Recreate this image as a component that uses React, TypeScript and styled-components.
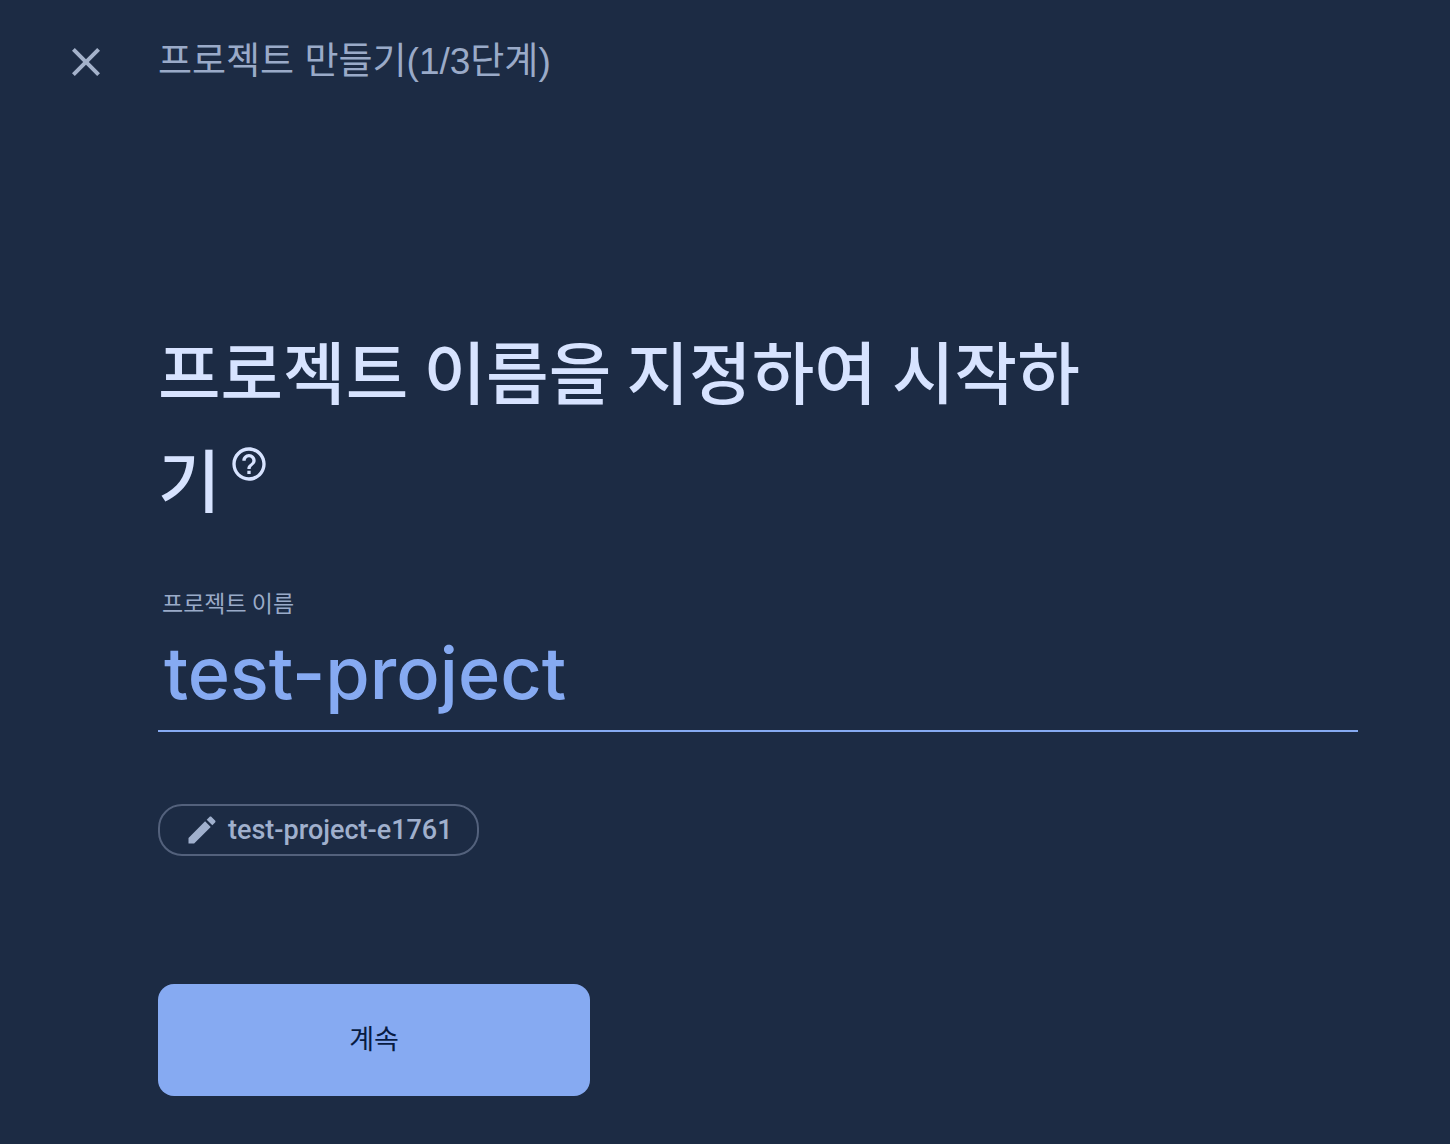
import React, { useState } from "react";
import styled, { createGlobalStyle } from "styled-components";

const GlobalStyle = createGlobalStyle`
  *, *::before, *::after { box-sizing: border-box; }
  body {
    margin: 0;
    background: #1c2b44;
    font-family: "Noto Sans CJK KR", sans-serif;
  }
`;

const Page = styled.div`
  min-height: 100vh;
  padding: 32px 92px 48px 56px;
  background: #1c2b44;
`;

const TopBar = styled.header`
  display: flex;
  align-items: center;
  gap: 42px;
  height: 60px;
`;

const CloseButton = styled.button`
  display: flex;
  align-items: center;
  justify-content: center;
  width: 60px;
  height: 60px;
  padding: 0;
  border: 0;
  background: none;
  color: #a4b2cb;
  cursor: pointer;
`;

const StepTitle = styled.h1`
  margin: 0;
  color: #9aaac8;
  font-family: "Liberation Sans", "Noto Sans CJK KR", sans-serif;
  font-size: 37px;
  font-weight: 400;
  line-height: 60px;
`;

const Form = styled.form`
  display: flex;
  flex-direction: column;
  align-items: flex-start;
  margin-top: 224px;
  padding-left: 102px;
`;

const Heading = styled.h2`
  max-width: 960px;
  margin: 0;
  color: #d7e3ff;
  font-size: 68px;
  font-weight: 500;
  line-height: 108px;
  word-break: break-all;
`;

const HelpButton = styled.button`
  display: inline-flex;
  margin-left: 8px;
  padding: 0;
  border: 0;
  background: none;
  color: inherit;
  vertical-align: 23px;
  cursor: pointer;
`;

const FieldLabel = styled.label`
  margin-top: 54px;
  padding-left: 4px;
  color: #9aaac8;
  font-size: 23px;
  line-height: 32px;
`;

const NameInput = styled.input`
  width: 100%;
  height: 114px;
  padding: 0 6px 4px;
  border: 0;
  border-bottom: 2px solid #86aaf2;
  outline: 0;
  background: none;
  color: #86aaf2;
  font-family: Inter, "Noto Sans CJK KR", sans-serif;
  font-size: 72px;
  font-weight: 500;
`;

const IdChip = styled.button`
  display: flex;
  align-items: center;
  gap: 8px;
  height: 52px;
  margin-top: 72px;
  padding: 0 24px;
  border: 2px solid #53617c;
  border-radius: 24px;
  background: none;
  color: #a0b0cd;
  font-family: Roboto, sans-serif;
  font-size: 27px;
  font-weight: 500;
  cursor: pointer;
`;

const ContinueButton = styled.button`
  width: 432px;
  height: 112px;
  margin-top: 128px;
  padding: 0 0 6px;
  border: 0;
  border-radius: 16px;
  background: #86aaf2;
  color: #081b42;
  font-family: "Noto Sans CJK KR", sans-serif;
  font-size: 27px;
  font-weight: 400;
  cursor: pointer;
`;

function CloseIcon() {
  return (
    <svg width="48" height="48" viewBox="0 0 24 24" fill="currentColor" aria-hidden="true">
      <path d="M19 6.41 17.59 5 12 10.59 6.41 5 5 6.41 10.59 12 5 17.59 6.41 19 12 13.41 17.59 19 19 17.59 13.41 12z" />
    </svg>
  );
}

function HelpIcon() {
  return (
    <svg width="40" height="40" viewBox="0 0 24 24" fill="currentColor" aria-hidden="true">
      <path d="M11 18h2v-2h-2v2zm1-16C6.48 2 2 6.48 2 12s4.48 10 10 10 10-4.480 10-10S17.52 2 12 2zm0 18c-4.410 0-8-3.590-8-8s3.590-8 8-8 8 3.590 8 8-3.590 8-8 8zm0-14c-2.210 0-4 1.790-4 4h2c0-1.100.9-2 2-2s2 .9 2 2c0 2-3 1.750-3 5h2c0-2.250 3-2.500 3-5 0-2.210-1.790-4-4-4z" />
    </svg>
  );
}

function PencilIcon() {
  return (
    <svg width="36" height="36" viewBox="0 0 24 24" fill="currentColor" aria-hidden="true">
      <path d="M3 17.250V21h3.750L17.810 9.940l-3.750-3.750L3 17.250zM20.710 7.040c.39-.39.39-1.020 0-1.410l-2.340-2.340c-.39-.39-1.020-.39-1.410 0l-1.830 1.830 3.750 3.750 1.830-1.830z" />
    </svg>
  );
}

export default function App() {
  const [name, setName] = useState("test-project");
  return (
    <>
      <GlobalStyle />
      <Page>
        <TopBar>
          <CloseButton type="button" aria-label="닫기">
            <CloseIcon />
          </CloseButton>
          <StepTitle>프로젝트 만들기(1/3단계)</StepTitle>
        </TopBar>
        <Form onSubmit={(event) => event.preventDefault()}>
          <Heading>
            프로젝트 이름을 지정하여 시작하기
            <HelpButton type="button" aria-label="도움말">
              <HelpIcon />
            </HelpButton>
          </Heading>
          <FieldLabel htmlFor="project-name">프로젝트 이름</FieldLabel>
          <NameInput id="project-name" value={name} onChange={(event) => setName(event.target.value)} />
          <IdChip type="button">
            <PencilIcon />
            test-project-e1761
          </IdChip>
          <ContinueButton type="submit">계속</ContinueButton>
        </Form>
      </Page>
    </>
  );
}
